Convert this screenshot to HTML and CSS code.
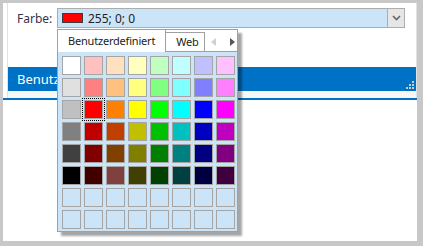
FILE: index.html
```html
<!DOCTYPE html>
<html lang="de">
<head>
    <meta charset="UTF-8">
    <title>Farbe</title>
    <link rel="stylesheet" href="styles.css">
</head>
<body>
    <div class="window">
        <div class="panel">
            <div class="field-row">
                <span class="label">Farbe:</span>
                <div class="combo">
                    <span class="combo-swatch"></span>
                    <span class="combo-text">255; 0; 0</span>
                    <span class="combo-button">
                        <svg width="9" height="6" viewBox="0 0 9 6"><path d="M1 1 L4.5 4.5 L8 1" fill="none" stroke="#666" stroke-width="1.6"/></svg>
                    </span>
                </div>
            </div>
            <div class="caption-bar">
                <span class="caption-text">Benutzerdefinierte Farben</span>
                <svg class="grip" width="8" height="8" viewBox="0 0 8 8">
                    <rect x="6" y="0" width="2" height="2" fill="#c7ccd3"/>
                    <rect x="3" y="3" width="2" height="2" fill="#c7ccd3"/>
                    <rect x="6" y="3" width="2" height="2" fill="#c7ccd3"/>
                    <rect x="0" y="6" width="2" height="2" fill="#c7ccd3"/>
                    <rect x="3" y="6" width="2" height="2" fill="#c7ccd3"/>
                    <rect x="6" y="6" width="2" height="2" fill="#c7ccd3"/>
                </svg>
            </div>
            <div class="caption-foot"></div>
        </div>

        <!-- Farbauswahl (aufgeklappt) -->
        <div class="picker">
            <div class="tabs">
                <div class="tab active">Benutzerdefiniert</div>
                <div class="tab">Web</div>
                <div class="tab-arrows">
                    <svg width="5" height="8" viewBox="0 0 5 8"><path d="M5 0 L0 4 L5 8 Z" fill="#d0d0d0"/></svg>
                    <svg width="5" height="8" viewBox="0 0 5 8"><path d="M0 0 L5 4 L0 8 Z" fill="#555"/></svg>
                </div>
            </div>
            <div class="palette" id="palette"></div>
        </div>
    </div>

    <script>
        // Standardpalette, zeilenweise
        const colors = [
            '#ffffff', '#ffc0c0', '#ffe0c0', '#ffffc0', '#c0ffc0', '#c0ffff', '#c0c0ff', '#ffc0ff',
            '#e0e0e0', '#ff8080', '#ffc080', '#ffff80', '#80ff80', '#80ffff', '#8080ff', '#ff80ff',
            '#c0c0c0', '#ff0000', '#ff8000', '#ffff00', '#00ff00', '#00ffff', '#0000ff', '#ff00ff',
            '#808080', '#c00000', '#c04000', '#c0c000', '#00c000', '#00c0c0', '#0000c0', '#c000c0',
            '#404040', '#800000', '#804000', '#808000', '#008000', '#008080', '#000080', '#800080',
            '#000000', '#400000', '#804040', '#404000', '#004000', '#004040', '#000040', '#400040'
        ];
        const palette = document.getElementById('palette');
        for (let i = 0; i < 64; i++) {
            const cell = document.createElement('div');
            cell.className = 'cell';
            if (i < colors.length) {
                cell.style.backgroundColor = colors[i];
            } else {
                cell.classList.add('empty');
            }
            if (colors[i] === '#ff0000') {
                cell.classList.add('selected');
            }
            palette.appendChild(cell);
        }
    </script>
</body>
</html>
```

FILE: styles.css
```css
/* Grundlayout */
body {
    margin: 0;
    width: 423px;
    height: 246px;
    background-color: #c8c8c8;
    font-family: "Noto Sans", Arial, sans-serif;
    font-size: 12px;
    overflow: hidden;
}

.window {
    position: relative;
    margin: 3px 0 0 3px;
    width: 414px;
    height: 238px;
    background-color: #fff;
}

.panel {
    margin-left: 4px;
    width: 408px;
    border-left: 1px solid #e3e3e3;
    border-right: 1px solid #e3e3e3;
    padding-top: 5px;
}

/* Zeile mit Combobox */
.field-row {
    display: flex;
    align-items: center;
    height: 20px;
}

.label {
    width: 49px;
    padding-left: 9px;
    box-sizing: border-box;
    color: #33334d;
}

.combo {
    display: flex;
    align-items: center;
    width: 348px;
    height: 20px;
    box-sizing: border-box;
    border: 1px solid #adadad;
    background-color: #cce4f7;
}

.combo-swatch {
    width: 19px;
    height: 8px;
    margin-left: 4px;
    border: 1px solid #3c3c3c;
    background-color: #ff0000;
}

.combo-text {
    margin-left: 5px;
    flex: 1;
    color: #222;
}

.combo-button {
    display: flex;
    align-items: center;
    justify-content: center;
    width: 16px;
    height: 18px;
    border-left: 1px solid #adadad;
    background-color: #e6e6e6;
}

/* Blaue Leiste */
.caption-bar {
    display: flex;
    align-items: center;
    margin-top: 39px;
    height: 24px;
    padding-left: 9px;
    background-color: #0072c6;
    color: #fff;
    font-size: 13px;
}

.caption-text {
    flex: 1;
    white-space: nowrap;
}

.grip {
    align-self: flex-end;
    margin: 0 2px 2px 0;
}

.caption-foot {
    height: 7px;
    background-color: #f7f7f7;
}

.window::after {
    content: "";
    position: absolute;
    left: 0;
    top: 95px;
    width: 414px;
    height: 2px;
    background-color: #0072c6;
}

/* Aufgeklappte Farbauswahl */
.picker {
    position: absolute;
    left: 54px;
    top: 26px;
    width: 181px;
    height: 203px;
    box-sizing: border-box;
    border: 1px solid #a0a0a0;
    background-color: #cce4f7;
    box-shadow: 4px 4px 2px rgba(0, 0, 0, 0.35);
    z-index: 2;
}

.tabs {
    display: flex;
    align-items: flex-end;
    height: 22px;
    background-color: #fff;
    font-size: 11px;
    letter-spacing: -0.2px;
}

.tab {
    height: 20px;
    padding: 0 5px 0 10px;
    box-sizing: border-box;
    border: 1px solid #a0a0a0;
    border-left: none;
    background-color: #fff;
    color: #222;
    line-height: 18px;
}

.tab.active {
    height: 22px;
    padding: 2px 10px 0;
    border-top: none;
    border-bottom: none;
}

.tab-arrows {
    display: flex;
    align-items: center;
    gap: 14px;
    height: 20px;
    padding-left: 6px;
    flex: 1;
    border-bottom: 1px solid #a0a0a0;
    box-sizing: border-box;
}

.palette {
    display: grid;
    grid-template-columns: repeat(8, 19px);
    grid-auto-rows: 19px;
    gap: 3px;
    padding: 4px 0 0 4px;
}

.cell {
    box-sizing: border-box;
    border: 1px solid #a5a5a5;
}

.cell.empty {
    background-color: transparent;
}

.cell.selected {
    outline: 1px dotted #000;
    outline-offset: 1px;
}
```
